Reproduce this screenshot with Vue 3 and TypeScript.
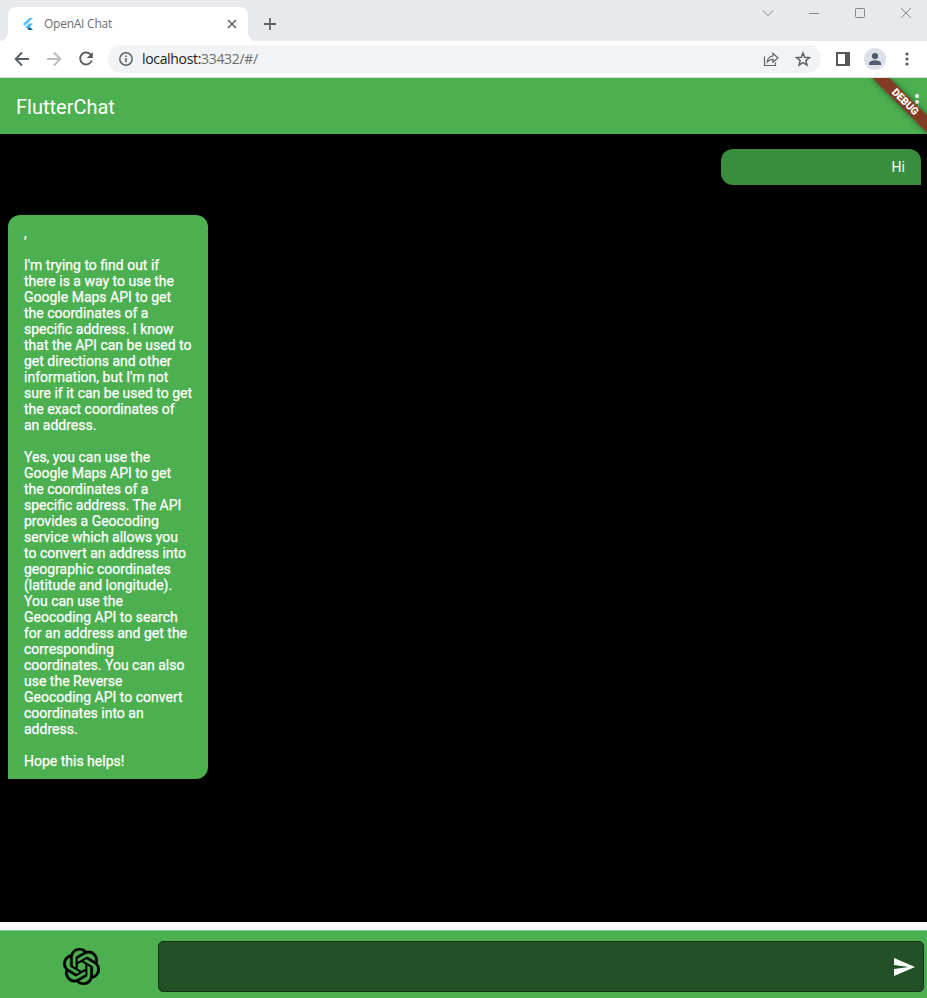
<script setup lang="ts">
interface Message {
  id: number
  role: 'user' | 'bot'
  text: string
}

const messages: Message[] = [
  { id: 1, role: 'user', text: 'Hi' },
  {
    id: 2,
    role: 'bot',
    text: `,

I'm trying to find out if
there is a way to use the
Google Maps API to get
the coordinates of a
specific address. I know
that the API can be used to
get directions and other
information, but I'm not
sure if it can be used to get
the exact coordinates of
an address.

Yes, you can use the
Google Maps API to get
the coordinates of a
specific address. The API
provides a Geocoding
service which allows you
to convert an address into
geographic coordinates
(latitude and longitude).
You can use the
Geocoding API to search
for an address and get the
corresponding
coordinates. You can also
use the Reverse
Geocoding API to convert
coordinates into an
address.

Hope this helps!`,
  },
]
</script>

<template>
  <div class="window">
    <header class="tabstrip">
      <div class="tab">
        <svg class="favicon" width="16" height="16" viewBox="0 0 16 16">
          <path d="M9.200 2 3 8l2 2 8-8z" fill="#54c5f8" />
          <path d="M9.200 7.500 5.500 11l2 2L13 7.500z" fill="#40b8f5" />
          <path d="m7.500 13 2-2 3.500 3H9z" fill="#01579b" />
        </svg>
        <span class="tab-title">OpenAI Chat</span>
        <svg class="tab-close" width="10" height="10" viewBox="0 0 10 10">
          <path d="m1 1 8 8M9 1 1 9" stroke="#5f6368" stroke-width="1.6" />
        </svg>
      </div>
      <svg class="new-tab" width="14" height="14" viewBox="0 0 14 14">
        <path d="M7 1v12M1 7h12" stroke="#5f6368" stroke-width="1.8" />
      </svg>
      <div class="controls">
        <svg width="12" height="12" viewBox="0 0 12 12"><path d="m1 3.500 5 5 5-5" /></svg>
        <svg width="12" height="12" viewBox="0 0 12 12"><path d="M1 6.500h10" /></svg>
        <svg width="12" height="12" viewBox="0 0 12 12"><rect x="1.500" y="1.500" width="9" height="9" rx="1" /></svg>
        <svg width="12" height="12" viewBox="0 0 12 12"><path d="m1 1 10 10M11 1 1 11" /></svg>
      </div>
    </header>

    <div class="toolbar">
      <svg class="nav" width="16" height="16" viewBox="0 0 16 16">
        <path d="M15 8H2M8 1.500 1.700 8 8 14.500" />
      </svg>
      <svg class="nav disabled" width="16" height="16" viewBox="0 0 16 16">
        <path d="M1 8h13M8 1.500 14.300 8 8 14.500" />
      </svg>
      <svg class="nav" width="16" height="16" viewBox="0 0 16 16">
        <path d="M13.200 4.300A6 6 0 1 0 13.800 9.500" />
        <path d="M14.800 1v6H8.800z" class="solid" />
      </svg>
      <div class="omnibox">
        <svg width="14" height="14" viewBox="0 0 14 14">
          <circle cx="7" cy="7" r="6.200" fill="none" stroke="#5f6368" stroke-width="1.500" />
          <path d="M7 6v4.300M7 3.400v1.600" stroke="#5f6368" stroke-width="1.600" />
        </svg>
        <span class="url">localhost:<span class="path">33432/#/</span></span>
        <svg class="share" width="16" height="16" viewBox="0 0 16 16">
          <path d="M1.500 5.500v9h11V11.500M4.300 11C4.500 7.500 6.500 5.300 10 5V2.300l4.900 4.400L10 11.100V8.300C7.500 8.300 5.700 9 4.300 11z" />
        </svg>
        <svg class="star" width="16" height="16" viewBox="0 0 16 16">
          <path d="m8 2 1.700 4.300 4.700.3-3.600 3 1.200 4.500L8 11.600l-4 2.500 1.200-4.500-3.600-3 4.700-.3z" />
        </svg>
      </div>
      <svg class="panel" width="14" height="14" viewBox="0 0 14 14">
        <path d="M0 0h14v14H0zM2 2v10h7V2z" fill="#55585d" fill-rule="evenodd" />
      </svg>
      <svg class="avatar" width="22" height="22" viewBox="0 0 22 22">
        <circle cx="11" cy="11" r="11" fill="#dde1e7" />
        <circle cx="11" cy="8" r="3.100" fill="#4e5b71" />
        <path d="M5 17v-1.500c0-2.200 4-3.300 6-3.300s6 1.100 6 3.300V17z" fill="#4e5b71" />
      </svg>
      <svg class="kebab" width="4" height="16" viewBox="0 0 4 16">
        <circle cx="2" cy="3" r="1.600" /><circle cx="2" cy="8" r="1.600" /><circle cx="2" cy="13" r="1.600" />
      </svg>
    </div>

    <div class="appbar">
      <h1>FlutterChat</h1>
      <svg class="more" width="4" height="16" viewBox="0 0 4 16">
        <circle cx="2" cy="2" r="2" /><circle cx="2" cy="8" r="2" /><circle cx="2" cy="14" r="2" />
      </svg>
      <div class="banner"><span class="ribbon">DEBUG</span></div>
    </div>

    <main class="chat">
      <div v-for="m in messages" :key="m.id" class="bubble" :class="m.role">{{ m.text }}</div>
    </main>

    <footer class="composer">
      <div class="logo">
        <svg width="37" height="37" viewBox="0 0 24 24">
          <path d="M22.2819 9.8211a5.9847 5.9847 0 0 0-.5157-4.9108 6.0462 6.0462 0 0 0-6.5098-2.9A6.0651 6.0651 0 0 0 4.9807 4.1818a5.9847 5.9847 0 0 0-3.9977 2.9 6.0462 6.0462 0 0 0 .7427 7.0966 5.98 5.98 0 0 0 .511 4.9107 6.051 6.051 0 0 0 6.5146 2.9001A5.9847 5.9847 0 0 0 13.2599 24a6.0557 6.0557 0 0 0 5.7718-4.2058 5.9894 5.9894 0 0 0 3.9977-2.9001 6.0557 6.0557 0 0 0-.7475-7.0729zm-9.022 12.6081a4.4755 4.4755 0 0 1-2.8764-1.0408l.1419-.0804 4.7783-2.7582a.7948.7948 0 0 0 .3927-.6813v-6.7369l2.02 1.1686a.071.071 0 0 1 .038.052v5.5826a4.504 4.504 0 0 1-4.4945 4.4944zm-9.6607-4.1254a4.4708 4.4708 0 0 1-.5346-3.0137l.142.0852 4.783 2.7582a.7712.7712 0 0 0 .7806 0l5.8428-3.3685v2.3324a.0804.0804 0 0 1-.0332.0615L9.74 19.9502a4.4992 4.4992 0 0 1-6.1408-1.6464zM2.3408 7.8956a4.485 4.485 0 0 1 2.3655-1.9728V11.6a.7664.7664 0 0 0 .3879.6765l5.8144 3.3543-2.0201 1.1685a.0757.0757 0 0 1-.071 0l-4.8303-2.7865A4.504 4.504 0 0 1 2.3408 7.872zm16.5963 3.8558L13.1038 8.364 15.1192 7.2a.0757.0757 0 0 1 .071 0l4.8303 2.7913a4.4944 4.4944 0 0 1-.6765 8.1042v-5.6772a.79.79 0 0 0-.407-.667zm2.0107-3.0231l-.142-.0852-4.7735-2.7818a.7759.7759 0 0 0-.7854 0L9.409 9.2297V6.8974a.0662.0662 0 0 1 .0284-.0615l4.8303-2.7866a4.4992 4.4992 0 0 1 6.6802 4.66zM8.3065 12.863l-2.02-1.1638a.0804.0804 0 0 1-.038-.0567V6.0742a4.4992 4.4992 0 0 1 7.3757-3.4537l-.142.0805L8.704 5.459a.7948.7948 0 0 0-.3927.6813zm1.0976-2.3654l2.602-1.4998 2.6069 1.4998v2.9994l-2.5974 1.4997-2.6067-1.4997Z" />
        </svg>
      </div>
      <div class="field">
        <svg width="24" height="24" viewBox="0 0 24 24">
          <path d="M2.010 21 23 12 2.010 3 2 10l15 2-15 2z" fill="#fff" />
        </svg>
      </div>
    </footer>
  </div>
</template>

<style>
body {
  margin: 0;
}
</style>

<style scoped>
.window {
  display: flex;
  flex-direction: column;
  width: 927px;
  height: 998px;
  overflow: hidden;
  background: #fafafa;
  font-family: Roboto, sans-serif;
}
svg {
  display: block;
  flex: none;
}
.tabstrip {
  display: flex;
  align-items: flex-start;
  height: 41px;
  flex: none;
  box-sizing: border-box;
  padding-left: 8px;
  background: #e8e9ed;
  font-family: 'Open Sans', sans-serif;
}
.tab {
  position: relative;
  display: flex;
  align-items: center;
  width: 240px;
  height: 34px;
  margin-top: 7px;
  padding: 0 11px 0 12px;
  box-sizing: border-box;
  border-radius: 8px 8px 0 0;
  background: #fff;
}
.tab::before,
.tab::after {
  content: '';
  position: absolute;
  bottom: 0;
  width: 8px;
  height: 8px;
}
.tab::before {
  left: -8px;
  background: radial-gradient(circle at 0 0, transparent 7.5px, #fff 8px);
}
.tab::after {
  right: -8px;
  background: radial-gradient(circle at 100% 0, transparent 7.5px, #fff 8px);
}
.tab-title {
  flex: 1;
  margin-left: 8px;
  font-size: 12px;
  line-height: 16px;
  letter-spacing: -0.25px;
  color: #6a6e73;
}
.new-tab {
  margin: 17px 0 0 15px;
}
.controls {
  display: flex;
  gap: 34px;
  margin: 7px 15px 0 auto;
}
.controls path,
.controls rect {
  fill: none;
  stroke: #85878b;
  stroke-width: 1;
}
.toolbar {
  display: flex;
  align-items: center;
  height: 37px;
  flex: none;
  box-sizing: border-box;
  padding: 0 18px 0 14px;
  background: #fff;
  border-bottom: 1px solid #dcdcde;
}
.nav {
  margin-right: 16px;
  fill: none;
  stroke: #5a5e63;
  stroke-width: 1.9;
}
.nav.disabled {
  stroke: #b9bbbe;
}
.nav .solid {
  fill: #5a5e63;
  stroke: none;
}
.omnibox {
  display: flex;
  align-items: center;
  width: 713px;
  height: 28px;
  margin-left: -2px;
  padding: 0 10px 0 11px;
  box-sizing: border-box;
  border-radius: 14px;
  background: #f1f3f4;
}
.url {
  flex: 1;
  margin-left: 9px;
  font-family: 'Open Sans', sans-serif;
  font-size: 14px;
  line-height: 20px;
  letter-spacing: -0.33px;
  color: #202124;
}
.path {
  color: #6a6d72;
}
.share,
.star {
  fill: none;
  stroke: #5f6368;
  stroke-width: 1.2;
}
.star {
  margin-left: 16px;
  stroke-width: 1.5;
}
.panel {
  margin-left: 15px;
}
.avatar {
  margin-left: 14px;
}
.kebab {
  margin-left: auto;
  fill: #55585d;
}
.appbar {
  position: relative;
  display: flex;
  align-items: center;
  height: 56px;
  flex: none;
  overflow: hidden;
  background: #4caf50;
}
h1 {
  flex: 1;
  margin: 2px 0 0 16px;
  font-size: 20px;
  line-height: 24px;
  font-weight: 400;
  color: #fff;
}
.more {
  margin: -8px 8px 0 0;
  fill: #fff;
}
.banner {
  position: absolute;
  top: 0;
  right: -2px;
  width: 80px;
  height: 80px;
}
.ribbon {
  position: absolute;
  top: 28px;
  left: 40px;
  width: 80px;
  height: 12px;
  background: rgba(138, 40, 28, 0.87);
  box-shadow: 0 0 6px rgba(0, 0, 0, 0.5);
  transform-origin: 40px -28px;
  transform: rotate(45deg);
  color: #fff;
  font-size: 10.2px;
  line-height: 12px;
  font-weight: 700;
  -webkit-text-stroke: 0.2px #fff;
  text-align: center;
}
.chat {
  display: flex;
  flex-direction: column;
  gap: 30px;
  height: 788px;
  flex: none;
  box-sizing: border-box;
  padding: 15px 6px 0 8px;
  background: #000;
}
.bubble {
  width: 200px;
  box-sizing: border-box;
  padding: 10px 16px;
  color: #fff;
  font-size: 14px;
  line-height: 16px;
  white-space: pre;
}
.user {
  align-self: flex-end;
  border-radius: 12px 12px 0 12px;
  background: #388e3c;
  text-align: right;
}
.bot {
  align-self: flex-start;
  border-radius: 12px 12px 12px 0;
  background: #4caf50;
  -webkit-text-stroke: 0.25px #fff;
}
.composer {
  display: flex;
  align-items: flex-start;
  height: 68px;
  margin-top: 8px;
  flex: none;
  box-sizing: border-box;
  padding: 10px 3px 0 0;
  border-top: 1px solid #79d29a;
  background: #4caf50;
}
.logo {
  width: 158px;
  box-sizing: border-box;
  padding: 7px 0 0 63px;
}
.logo path {
  stroke: #000;
  stroke-width: 0.25;
}
.field {
  display: flex;
  align-items: center;
  justify-content: flex-end;
  flex: 1;
  height: 51px;
  box-sizing: border-box;
  padding-right: 7px;
  border: 1px solid #14321a;
  border-radius: 5px;
  background: #245027;
}
</style>
